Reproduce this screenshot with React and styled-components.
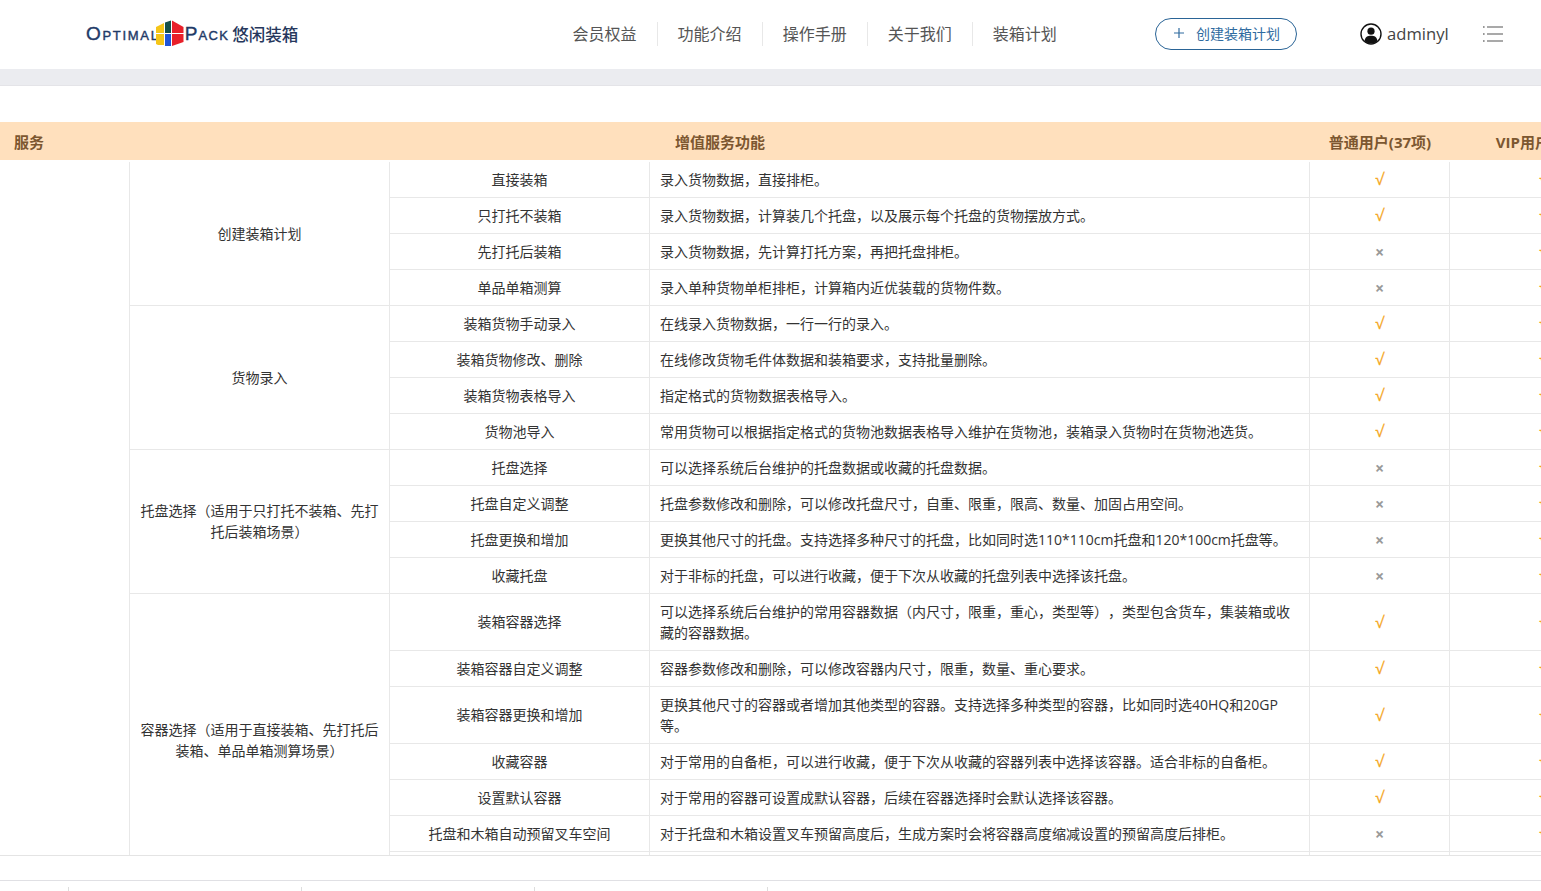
import React from "react";
import styled, { createGlobalStyle } from "styled-components";

const GlobalStyle = createGlobalStyle`
  html, body {
    margin: 0;
    height: 100%;
    overflow: hidden;
    background: #fff;
    font-family: "Open Sans", "Noto Sans CJK SC", sans-serif;
    color: #333;
    text-spacing-trim: space-all;
  }
`;

const groups = [
  {
    title: "创建装箱计划",
    rows: [
      ["直接装箱", "录入货物数据，直接排柜。", true],
      ["只打托不装箱", "录入货物数据，计算装几个托盘，以及展示每个托盘的货物摆放方式。", true],
      ["先打托后装箱", "录入货物数据，先计算打托方案，再把托盘排柜。", false],
      ["单品单箱测算", "录入单种货物单柜排柜，计算箱内近优装载的货物件数。", false],
    ],
  },
  {
    title: "货物录入",
    rows: [
      ["装箱货物手动录入", "在线录入货物数据，一行一行的录入。", true],
      ["装箱货物修改、删除", "在线修改货物毛件体数据和装箱要求，支持批量删除。", true],
      ["装箱货物表格导入", "指定格式的货物数据表格导入。", true],
      ["货物池导入", "常用货物可以根据指定格式的货物池数据表格导入维护在货物池，装箱录入货物时在货物池选货。", true],
    ],
  },
  {
    title: "托盘选择（适用于只打托不装箱、先打托后装箱场景）",
    wraps: true,
    rows: [
      ["托盘选择", "可以选择系统后台维护的托盘数据或收藏的托盘数据。", false],
      ["托盘自定义调整", "托盘参数修改和删除，可以修改托盘尺寸，自重、限重，限高、数量、加固占用空间。", false],
      ["托盘更换和增加", "更换其他尺寸的托盘。支持选择多种尺寸的托盘，比如同时选110*110cm托盘和120*100cm托盘等。", false],
      ["收藏托盘", "对于非标的托盘，可以进行收藏，便于下次从收藏的托盘列表中选择该托盘。", false],
    ],
  },
  {
    title: "容器选择（适用于直接装箱、先打托后装箱、单品单箱测算场景）",
    wraps: true,
    rows: [
      ["装箱容器选择", "可以选择系统后台维护的常用容器数据（内尺寸，限重，重心，类型等），类型包含货车，集装箱或收藏的容器数据。", true, true],
      ["装箱容器自定义调整", "容器参数修改和删除，可以修改容器内尺寸，限重，数量、重心要求。", true],
      ["装箱容器更换和增加", "更换其他尺寸的容器或者增加其他类型的容器。支持选择多种类型的容器，比如同时选40HQ和20GP等。", true, true],
      ["收藏容器", "对于常用的自备柜，可以进行收藏，便于下次从收藏的容器列表中选择该容器。适合非标的自备柜。", true],
      ["设置默认容器", "对于常用的容器可设置成默认容器，后续在容器选择时会默认选择该容器。", true],
      ["托盘和木箱自动预留叉车空间", "对于托盘和木箱设置叉车预留高度后，生成方案时会将容器高度缩减设置的预留高度后排柜。", false],
      ["\u00a0", "", false],
    ],
  },
];

const navItems = ["会员权益", "功能介绍", "操作手册", "关于我们", "装箱计划"];

const totalRows = groups.reduce((sum, g) => sum + g.rows.length, 0);

function Mark({ on }) {
  return on ? <Check>√</Check> : <Cross>×</Cross>;
}

export default function App() {
  return (
    <Page>
      <GlobalStyle />
      <Header>
        <Logo>
          <LogoWord $first>Optimal</LogoWord>
          <svg width="30" height="28" viewBox="0 0 30 28">
            <path d="M1 7 L9 3 V13 H1 Z" fill="#f5c518" />
            <path d="M1 14 H9 V25 H3 L1 24 Z" fill="#f5c518" />
            <path d="M10 2.5 L16 0.5 V13 H10 Z" fill="#14504a" />
            <path d="M10 14 H16 V26 H10 Z" fill="#1f55d8" />
            <path d="M17 0.5 L28.5 7 V13 H17 Z" fill="#e8202a" />
            <path d="M17 14 H28.5 V22 L17 26 Z" fill="#e8202a" />
          </svg>
          <LogoWord>Pack</LogoWord>
          <LogoCn>悠闲装箱</LogoCn>
        </Logo>
        <Nav>
          {navItems.map((item) => (
            <NavItem key={item}>{item}</NavItem>
          ))}
        </Nav>
        <CreateButton>
          <svg width="12" height="12" viewBox="0 0 12 12">
            <path d="M6 1 V11 M1 6 H11" stroke="#2f6b9f" strokeWidth="1.2" />
          </svg>
          创建装箱计划
        </CreateButton>
        <UserBox>
          <svg width="22" height="22" viewBox="0 0 22 22">
            <circle cx="11" cy="11" r="10" fill="#fff" stroke="#111" strokeWidth="1.4" />
            <circle cx="11" cy="8.2" r="3.6" fill="#111" />
            <path d="M4.6 18 C5 14 7.6 12.8 11 12.8 C14.4 12.8 17 14 17.4 18 C15.6 19.8 13.4 20.6 11 20.6 C8.6 20.6 6.4 19.8 4.6 18 Z" fill="#111" />
          </svg>
          adminyl
        </UserBox>
        <MenuIcon width="20" height="16" viewBox="0 0 20 16">
          <path d="M0 1 H1.6 M0 8 H1.6 M0 15 H1.6" stroke="#333" strokeWidth="1.2" />
          <path d="M4 1 H20 M4 8 H20 M4 15 H20" stroke="#555" strokeWidth="1.2" />
        </MenuIcon>
      </Header>
      <GrayBand />
      <TableArea>
        <Table>
          <colgroup>
            <col width="130" />
            <col width="260" />
            <col width="260" />
            <col width="660" />
            <col width="140" />
            <col width="188" />
          </colgroup>
          <thead>
            <tr>
              <HeadCell $left>服务</HeadCell>
              <HeadCell colSpan={3}>增值服务功能</HeadCell>
              <HeadCell>普通用户(37项)</HeadCell>
              <HeadCell>VIP用户(37项)</HeadCell>
            </tr>
          </thead>
          <tbody>
            {groups.map((group, gi) =>
              group.rows.map((row, ri) => (
                <tr key={gi + "-" + ri}>
                  {gi === 0 && ri === 0 && <Cell rowSpan={totalRows} />}
                  {ri === 0 && (
                    <Cell rowSpan={group.rows.length} $odd={group.wraps}>
                      {group.title}
                    </Cell>
                  )}
                  <Cell $odd={row[3]}>{row[0]}</Cell>
                  <TextCell>{row[1]}</TextCell>
                  <Cell>{row[1] && <Mark on={row[2]} />}</Cell>
                  <Cell>{row[1] && <Check>√</Check>}</Cell>
                </tr>
              ))
            )}
          </tbody>
        </Table>
      </TableArea>
      <Spacer />
      <Footer>
        <FooterCell />
        <FooterCell />
        <FooterCell />
        <FooterCell />
      </Footer>
    </Page>
  );
}

const Page = styled.div`
  width: 1541px;
  height: 891px;
  overflow: hidden;
  font-size: 14px;
`;

const Header = styled.header`
  height: 69px;
  display: flex;
  align-items: center;
  padding: 0 0 2px 86px;
  box-sizing: border-box;
`;

const Logo = styled.div`
  width: 214px;
  display: flex;
  align-items: center;
  white-space: nowrap;
  color: #1f3a68;
`;

const LogoWord = styled.span`
  font-family: "Liberation Sans", sans-serif;
  font-variant: small-caps;
  font-size: 19px;
  letter-spacing: ${(p) => (p.$first ? "1.7px" : "1.3px")};
  margin-right: ${(p) => (p.$first ? "-5px" : "0")};
  -webkit-text-stroke: 0.4px #1f3a68;
`;

const LogoCn = styled.span`
  font-size: 16.5px;
  font-weight: 500;
  color: #26375c;
  margin-left: 3px;
`;

const Nav = styled.nav`
  display: flex;
  align-items: center;
  margin-left: 252.6px;
`;

const NavItem = styled.a`
  font-size: 16px;
  line-height: 24px;
  color: #555;
  padding: 0 20px;
  border-right: 1px solid #e8e8e8;
  &:last-child {
    border-right: 0;
  }
`;

const CreateButton = styled.button`
  width: 142px;
  height: 32px;
  margin-left: 78.4px;
  padding: 0 0 1px 1px;
  box-sizing: border-box;
  display: flex;
  align-items: center;
  justify-content: center;
  gap: 11px;
  background: #fff;
  border: 1px solid #2a6496;
  border-radius: 16px;
  color: #2f6b9f;
  font-family: inherit;
  font-size: 14px;
`;

const UserBox = styled.div`
  display: flex;
  align-items: center;
  gap: 5px;
  margin-left: 63px;
  font-size: 16.6px;
  color: #444;
`;

const MenuIcon = styled.svg`
  margin-left: 34px;
`;

const GrayBand = styled.div`
  height: 16px;
  background: #ebecf0;
  border-bottom: 1px solid #e4e4e8;
`;

const TableArea = styled.div`
  margin-top: 36px;
  height: 733px;
  overflow: hidden;
  border-bottom: 1px solid #e4e4e4;
`;

const Table = styled.table`
  width: 1638px;
  table-layout: fixed;
  border-collapse: separate;
  border-spacing: 0;
`;

const HeadCell = styled.th`
  height: 38px;
  padding: 0 ${(p) => (p.$left ? "14px" : "0")};
  background: #ffe0bd;
  border-bottom: 2px solid #fff;
  color: #7c5730;
  font-size: 15px;
  font-weight: 700;
  text-align: ${(p) => (p.$left ? "left" : "center")};
  white-space: nowrap;
`;

const Cell = styled.td`
  padding: 7px 10px ${(p) => (p.$odd ? "8px" : "7px")};
  line-height: 21px;
  border-right: 1px solid #e8e8e8;
  border-bottom: 1px solid #e8e8e8;
  text-align: center;
  color: #333;
`;

const TextCell = styled(Cell)`
  padding-right: 18px;
  text-align: left;
`;

const Check = styled.span`
  color: #f5a623;
  font-size: 16px;
  -webkit-text-stroke: 0.2px #f5a623;
`;

const Cross = styled.span`
  display: inline-block;
  transform: translateY(1px);
  color: #999;
  font-size: 16px;
  font-weight: 700;
`;

const Spacer = styled.div`
  height: 24px;
`;

const Footer = styled.footer`
  height: 11px;
  border-top: 1px solid #e0e0e4;
  display: grid;
  grid-template-columns: 69px repeat(3, 233px) 1fr;
  padding-top: 6px;
  box-sizing: border-box;
`;

const FooterCell = styled.div`
  border-right: 1px solid #ddd;
`;
